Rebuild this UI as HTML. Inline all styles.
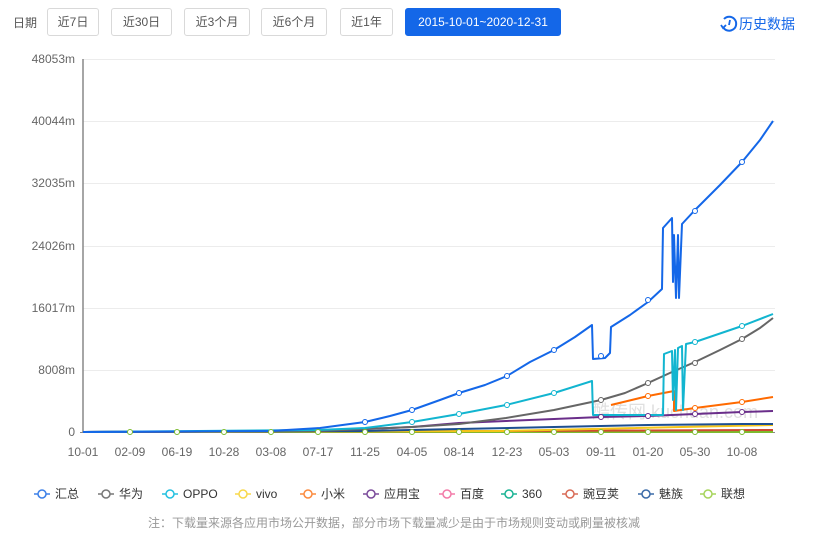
<!DOCTYPE html>
<html><head><meta charset="utf-8">
<style>
*{margin:0;padding:0;box-sizing:border-box}
body{width:825px;height:539px;background:#fff;font-family:"Liberation Sans","Noto Sans CJK SC",sans-serif;position:relative;overflow:hidden;color:#333}
.top{position:absolute;top:8px;left:0;height:28px;width:825px}
.lbl{position:absolute;left:13px;top:6px;font-size:12px;color:#555;white-space:nowrap}
.b{position:absolute;top:0;height:28px;border:1px solid #d9d9d9;border-radius:3px;font-size:12px;color:#555;line-height:26px;text-align:center;background:#fff;white-space:nowrap}
.b.on{background:#1467e8;border-color:#1467e8;color:#fff}
.hist{position:absolute;right:30px;top:7px;font-size:14px;color:#1467e8;display:flex;align-items:center;white-space:nowrap}
svg text{font-family:"Liberation Sans","Noto Sans CJK SC",sans-serif}
</style></head><body>
<div class="top">
<div class="lbl">日期</div>
<div class="b" style="left:47px;width:52px">近7日</div>
<div class="b" style="left:111px;width:61px">近30日</div>
<div class="b" style="left:184px;width:66px">近3个月</div>
<div class="b" style="left:261px;width:66px">近6个月</div>
<div class="b" style="left:340px;width:53px">近1年</div>
<div class="b on" style="left:405px;width:156px">2015-10-01~2020-12-31</div>
</div>
<div class="hist" style="top:14px;right:30px"><svg width="20" height="18" viewBox="0 0 20 18"><path d="M4 12 A7 7 0 1 0 5 4" fill="none" stroke="#1467e8" stroke-width="2"/><path d="M2 10 L4 13 L7 10" fill="none" stroke="#1467e8" stroke-width="1.8"/><path d="M11 5 L10 10" stroke="#1467e8" stroke-width="1.8"/></svg>历史数据</div>
<svg width="825" height="539" style="position:absolute;left:0;top:0">
<g stroke="#ececec" stroke-width="1">
<line x1="83" y1="59.5" x2="775" y2="59.5"/><line x1="83" y1="121.5" x2="775" y2="121.5"/><line x1="83" y1="183.5" x2="775" y2="183.5"/><line x1="83" y1="246.5" x2="775" y2="246.5"/><line x1="83" y1="308.5" x2="775" y2="308.5"/><line x1="83" y1="370.5" x2="775" y2="370.5"/>
</g>
<line x1="83" y1="59" x2="83" y2="433" stroke="#888" stroke-width="1.5"/>
<line x1="80" y1="432.5" x2="775" y2="432.5" stroke="#888" stroke-width="1"/>
<g font-size="12" fill="#666" text-anchor="end">
<text x="75" y="63">48053m</text><text x="75" y="125">40044m</text><text x="75" y="187">32035m</text><text x="75" y="250">24026m</text><text x="75" y="312">16017m</text><text x="75" y="374">8008m</text><text x="75" y="436">0</text>
</g>
<g font-size="12" fill="#666" text-anchor="middle">
<text x="83" y="456">10-01</text><text x="130" y="456">02-09</text><text x="177" y="456">06-19</text><text x="224" y="456">10-28</text><text x="271" y="456">03-08</text><text x="318" y="456">07-17</text><text x="365" y="456">11-25</text><text x="412" y="456">04-05</text><text x="459" y="456">08-14</text><text x="507" y="456">12-23</text><text x="554" y="456">05-03</text><text x="601" y="456">09-11</text><text x="648" y="456">01-20</text><text x="695" y="456">05-30</text><text x="742" y="456">10-08</text>
</g>
<text x="592" y="418" font-size="18" fill="#ccc" opacity="0.6">酷传网 kuchuan.com</text>
<g fill="none" stroke-width="2" stroke-linejoin="round">
<polyline stroke="#7cbb2e" points="83,432 773,432"/>
<polyline stroke="#d0482f" points="83,432 500,431 773,430"/>
<polyline stroke="#f5c518" points="83,432 500,431 773,425"/>
<polyline stroke="#1d4f91" points="83,432 365,431 459,429 554,427 648,425 742,424 773,424"/>
<polyline stroke="#6a2e8a" points="83,432 318,431 365,429 412,427 459,423 506,421 554,419 601,417 648,416 695,414 742,412 773,411"/>
<polyline stroke="#ff6a00" points="611,405 648,396 674,391 674,411 695,408 742,402 773,397"/>
<polyline stroke="#666" points="83,432 318,431 365,429 412,427 459,424 506,418 554,410 601,400 625,393 648,383 672,372 695,362 720,350 742,339 760,328 773,318"/>
<polyline stroke="#12b5d0" points="83,432 318,430 365,428 412,422 459,414 506,405 554,393 592,381 593,415 663,415 664,354 672,351 673,400 675,350 676,410 678,348 682,346 683,410 686,344 695,342 742,326 773,314"/>
<polyline stroke="#1467e8" points="83,432 270,431 320,428 365,422 390,416 412,410 440,400 459,393 485,385 507,376 530,362 554,350 575,337 592,325 593,359 605,358 610,353 611,327 630,315 648,302 662,289 663,228 672,218 673,282 674,235 676,298 678,235 679,298 682,224 695,210 720,185 742,162 760,140 773,121"/>
</g>
<g fill="#fff" stroke-width="1">
<circle cx="365" cy="422" r="2.5" stroke="#1467e8"/><circle cx="412" cy="410" r="2.5" stroke="#1467e8"/><circle cx="459" cy="393" r="2.5" stroke="#1467e8"/><circle cx="507" cy="376" r="2.5" stroke="#1467e8"/><circle cx="554" cy="350" r="2.5" stroke="#1467e8"/><circle cx="601" cy="356" r="2.5" stroke="#1467e8"/><circle cx="648" cy="300" r="2.5" stroke="#1467e8"/><circle cx="695" cy="211" r="2.5" stroke="#1467e8"/><circle cx="742" cy="162" r="2.5" stroke="#1467e8"/>
<circle cx="412" cy="422" r="2.5" stroke="#12b5d0"/><circle cx="459" cy="414" r="2.5" stroke="#12b5d0"/><circle cx="507" cy="405" r="2.5" stroke="#12b5d0"/><circle cx="554" cy="393" r="2.5" stroke="#12b5d0"/><circle cx="695" cy="342" r="2.5" stroke="#12b5d0"/><circle cx="742" cy="326" r="2.5" stroke="#12b5d0"/>
<circle cx="601" cy="400" r="2.5" stroke="#666"/><circle cx="648" cy="383" r="2.5" stroke="#666"/><circle cx="695" cy="363" r="2.5" stroke="#666"/><circle cx="742" cy="339" r="2.5" stroke="#666"/>
<circle cx="648" cy="396" r="2.5" stroke="#ff6a00"/><circle cx="695" cy="408" r="2.5" stroke="#ff6a00"/><circle cx="742" cy="402" r="2.5" stroke="#ff6a00"/>
<circle cx="601" cy="417" r="2.5" stroke="#6a2e8a"/><circle cx="648" cy="416" r="2.5" stroke="#6a2e8a"/><circle cx="695" cy="414" r="2.5" stroke="#6a2e8a"/><circle cx="742" cy="412" r="2.5" stroke="#6a2e8a"/>
<circle cx="130" cy="432" r="2.5" stroke="#7cbb2e"/><circle cx="177" cy="432" r="2.5" stroke="#7cbb2e"/><circle cx="224" cy="432" r="2.5" stroke="#7cbb2e"/><circle cx="271" cy="432" r="2.5" stroke="#7cbb2e"/><circle cx="318" cy="432" r="2.5" stroke="#7cbb2e"/><circle cx="365" cy="432" r="2.5" stroke="#7cbb2e"/><circle cx="412" cy="432" r="2.5" stroke="#7cbb2e"/><circle cx="459" cy="432" r="2.5" stroke="#7cbb2e"/><circle cx="507" cy="432" r="2.5" stroke="#7cbb2e"/><circle cx="554" cy="432" r="2.5" stroke="#7cbb2e"/><circle cx="601" cy="432" r="2.5" stroke="#7cbb2e"/><circle cx="648" cy="432" r="2.5" stroke="#7cbb2e"/><circle cx="695" cy="432" r="2.5" stroke="#7cbb2e"/><circle cx="742" cy="432" r="2.5" stroke="#7cbb2e"/>
</g>
<g font-size="12" fill="#333">
<g transform="translate(34,494)"><line x1="0" y1="0" x2="16" y2="0" stroke="#3b7fe8" stroke-width="1.5"/><circle cx="8" cy="0" r="4" fill="#fff" stroke="#3b7fe8" stroke-width="1.5"/><text x="21" y="4">汇总</text></g>
<g transform="translate(98,494)"><line x1="0" y1="0" x2="16" y2="0" stroke="#777" stroke-width="1.5"/><circle cx="8" cy="0" r="4" fill="#fff" stroke="#777" stroke-width="1.5"/><text x="21" y="4">华为</text></g>
<g transform="translate(162,494)"><line x1="0" y1="0" x2="16" y2="0" stroke="#22c0e0" stroke-width="1.5"/><circle cx="8" cy="0" r="4" fill="#fff" stroke="#22c0e0" stroke-width="1.5"/><text x="21" y="4">OPPO</text></g>
<g transform="translate(235,494)"><line x1="0" y1="0" x2="16" y2="0" stroke="#f8d84a" stroke-width="1.5"/><circle cx="8" cy="0" r="4" fill="#fff" stroke="#f8d84a" stroke-width="1.5"/><text x="21" y="4">vivo</text></g>
<g transform="translate(300,494)"><line x1="0" y1="0" x2="16" y2="0" stroke="#fb8a3e" stroke-width="1.5"/><circle cx="8" cy="0" r="4" fill="#fff" stroke="#fb8a3e" stroke-width="1.5"/><text x="21" y="4">小米</text></g>
<g transform="translate(363,494)"><line x1="0" y1="0" x2="16" y2="0" stroke="#7a4a9a" stroke-width="1.5"/><circle cx="8" cy="0" r="4" fill="#fff" stroke="#7a4a9a" stroke-width="1.5"/><text x="21" y="4">应用宝</text></g>
<g transform="translate(439,494)"><line x1="0" y1="0" x2="16" y2="0" stroke="#f27aa8" stroke-width="1.5"/><circle cx="8" cy="0" r="4" fill="#fff" stroke="#f27aa8" stroke-width="1.5"/><text x="21" y="4">百度</text></g>
<g transform="translate(501,494)"><line x1="0" y1="0" x2="16" y2="0" stroke="#1ab394" stroke-width="1.5"/><circle cx="8" cy="0" r="4" fill="#fff" stroke="#1ab394" stroke-width="1.5"/><text x="21" y="4">360</text></g>
<g transform="translate(562,494)"><line x1="0" y1="0" x2="16" y2="0" stroke="#d86a55" stroke-width="1.5"/><circle cx="8" cy="0" r="4" fill="#fff" stroke="#d86a55" stroke-width="1.5"/><text x="21" y="4">豌豆荚</text></g>
<g transform="translate(638,494)"><line x1="0" y1="0" x2="16" y2="0" stroke="#3a6aa8" stroke-width="1.5"/><circle cx="8" cy="0" r="4" fill="#fff" stroke="#3a6aa8" stroke-width="1.5"/><text x="21" y="4">魅族</text></g>
<g transform="translate(700,494)"><line x1="0" y1="0" x2="16" y2="0" stroke="#a6d45a" stroke-width="1.5"/><circle cx="8" cy="0" r="4" fill="#fff" stroke="#a6d45a" stroke-width="1.5"/><text x="21" y="4">联想</text></g>
</g>
<text x="148" y="527" font-size="12" fill="#999">注：下载量来源各应用市场公开数据，部分市场下载量减少是由于市场规则变动或刷量被核减</text>
</svg>
</body></html>
